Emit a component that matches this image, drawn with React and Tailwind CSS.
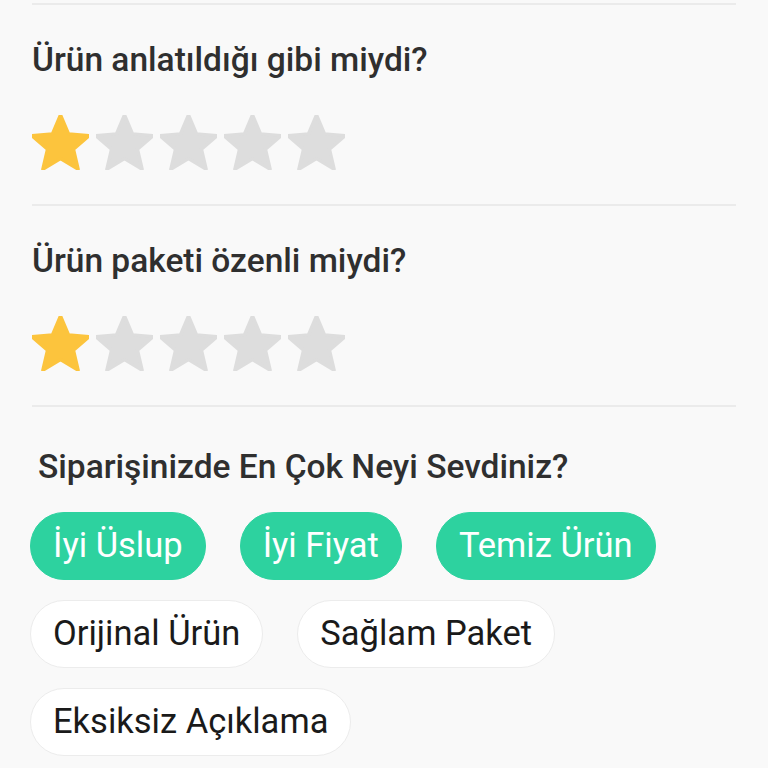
import React from "react";

const Star = ({ filled }) => (
    <svg width="57" height="55" viewBox="2 2 20 19.3" className="shrink-0">
        <path
            d="M12 17.27L18.18 21l-1.64-7.03L22 9.24l-7.19-.61L12 2 9.19 8.63 2 9.24l5.46 4.73L5.82 21z"
            fill={filled ? "#fcc43d" : "#dddddd"}
            stroke={filled ? "#fcc43d" : "#dddddd"}
            strokeWidth="1.2"
            strokeLinejoin="round"
        />
    </svg>
);

const Question = ({ title, rating }) => (
    <div className="border-t-2 border-[#ebebeb] pt-[35px] pb-[34px]">
        <h2 className="text-[33.5px] leading-[40px] font-medium text-[#2f2f2f]">{title}</h2>
        <div className="flex gap-[7px] mt-[35px]">
            {[1, 2, 3, 4, 5].map((i) => (
                <Star key={i} filled={i <= rating} />
            ))}
        </div>
    </div>
);

const chips = [
    { label: "İyi Üslup", active: true },
    { label: "İyi Fiyat", active: true },
    { label: "Temiz Ürün", active: true },
    { label: "Orijinal Ürün", active: false },
    { label: "Sağlam Paket", active: false },
    { label: "Eksiksiz Açıklama", active: false },
];

export default function App() {
    return (
        <div className="min-h-screen bg-[#f9f9f9] px-[32px] pt-[3px] font-['Roboto',sans-serif]">
            <Question title="Ürün anlatıldığı gibi miydi?" rating={1} />
            <Question title="Ürün paketi özenli miydi?" rating={1} />
            <div className="border-t-2 border-[#ebebeb] pt-[40px]">
                <h2 className="text-[33.5px] leading-[40px] font-medium text-[#2f2f2f] pl-[6px]">
                    Siparişinizde En Çok Neyi Sevdiniz?
                </h2>
                <div className="flex flex-wrap gap-x-[34px] gap-y-[20px] mt-[25px] -ml-[2px] w-[660px]">
                    {chips.map((c) => (
                        <span
                            key={c.label}
                            className={
                                c.active
                                    ? "h-[68px] px-[22px] rounded-full bg-[#2dd29f] text-white border border-[#2dd29f] text-[34.5px] flex items-center"
                                    : "h-[68px] px-[22px] rounded-full bg-white text-[#1a1a1a] border border-[#ececec] text-[34.5px] flex items-center"
                            }
                        >
                            {c.label}
                        </span>
                    ))}
                </div>
            </div>
        </div>
    );
}
